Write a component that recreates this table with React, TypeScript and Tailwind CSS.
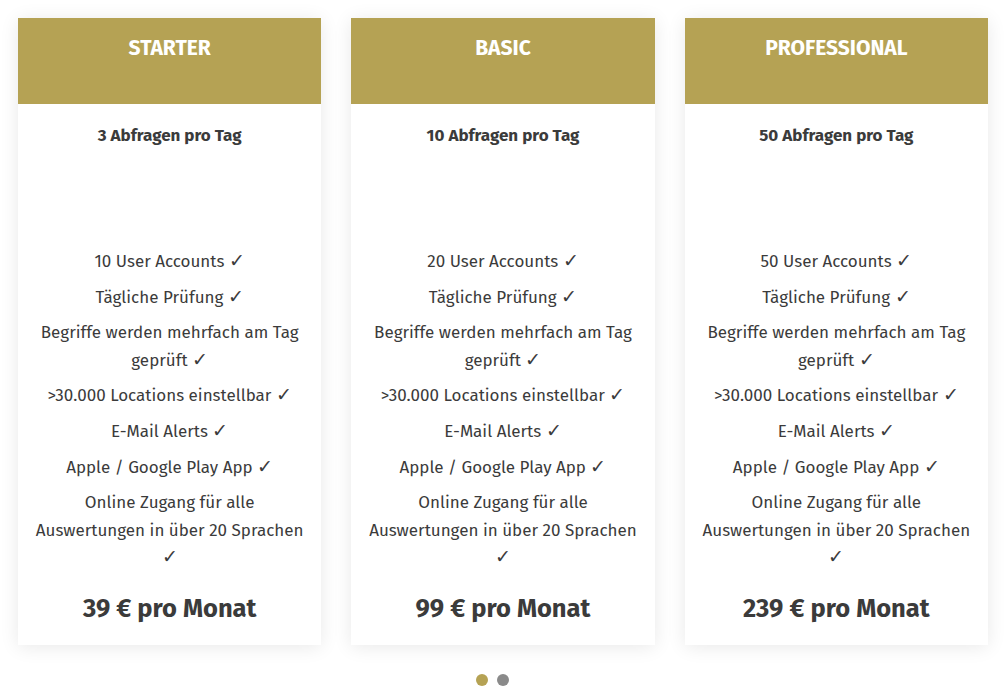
const plans = [
  { name: "STARTER", queries: "3 Abfragen pro Tag", users: "10", price: "39" },
  { name: "BASIC", queries: "10 Abfragen pro Tag", users: "20", price: "99" },
  { name: "PROFESSIONAL", queries: "50 Abfragen pro Tag", users: "50", price: "239" },
];

function Check() {
  return (
    <span className="font-['DejaVu_Sans',sans-serif] text-[19px] leading-none font-extralight">✓</span>
  );
}

function PlanCard({ plan }: { plan: (typeof plans)[number] }) {
  return (
    <div className="bg-white shadow-[0_2px_18px_rgba(0,0,0,0.09)] text-center text-[#3b3b3b]">
      <div className="h-[86px] bg-[#b5a254] pt-[17px]">
        <h2 className="text-[21px] leading-[26px] font-bold text-white">{plan.name}</h2>
      </div>
      <p className="pt-[20px] text-[17px] leading-[24px] font-bold">{plan.queries}</p>
      <ul className="mt-[100px] px-[12px] text-[17px] leading-[1.6] space-y-[8.5px]">
        <li>
          {plan.users} User Accounts <Check />
        </li>
        <li>
          Tägliche Prüfung <Check />
        </li>
        <li>
          Begriffe werden mehrfach am Tag
          <br />
          geprüft <Check />
        </li>
        <li>
          &gt;30.000 Locations einstellbar <Check />
        </li>
        <li>
          E-Mail Alerts <Check />
        </li>
        <li>
          Apple / Google Play App <Check />
        </li>
        <li>
          Online Zugang für alle
          <br />
          Auswertungen in über 20 Sprachen
          <br />
          <Check />
        </li>
      </ul>
      <p className="pt-[22px] pb-[20px] text-[25.5px] leading-[32px] font-bold">
        {plan.price} € pro Monat
      </p>
    </div>
  );
}

export default function App() {
  return (
    <div className="w-[1005px] h-[695px] bg-white pt-[18px] pl-[18px] font-['Fira_Sans','Open_Sans',sans-serif]">
      <div className="grid w-[970px] grid-cols-3 gap-[30px]">
        {plans.map((plan) => (
          <PlanCard key={plan.name} plan={plan} />
        ))}
      </div>
      <div className="mt-[29px] flex justify-center gap-[9px] pr-[38px]">
        <span className="h-[12px] w-[12px] rounded-full bg-[#b5a254]" />
        <span className="h-[12px] w-[12px] rounded-full bg-[#8a8a8a]" />
      </div>
    </div>
  );
}
